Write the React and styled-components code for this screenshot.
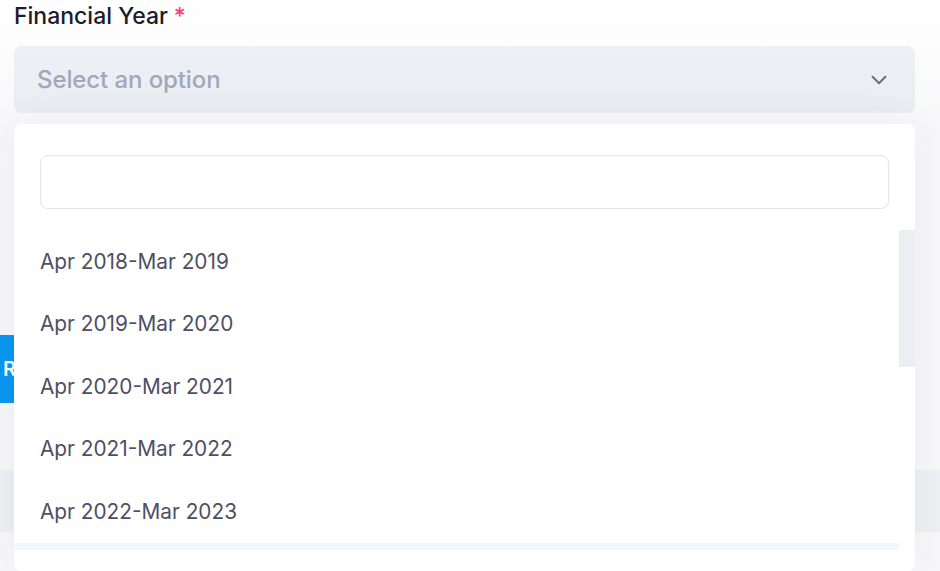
import React from "react";
import styled, { createGlobalStyle } from "styled-components";

const GlobalStyle = createGlobalStyle`
    html, body {
        margin: 0;
        padding: 0;
    }
    body {
        background: linear-gradient(#ffffff 0, #f7f7f9 140px);
        font-family: Inter, "Noto Sans", sans-serif;
        overflow: hidden;
    }
`;

const Page = styled.div`
    width: 940px;
    height: 571px;
    display: flex;
    flex-direction: column;
`;

const FormSection = styled.div`
    padding: 0 25px 0 14px;
`;

const Label = styled.label`
    display: block;
    padding-top: 2px;
    font-size: 23px;
    line-height: 28px;
    font-weight: 500;
    color: #1b1b29;
`;

const Required = styled.span`
    color: #f1416c;
    margin-left: 6px;
`;

const SelectWrap = styled.div`
    position: relative;
    margin-top: 16px;
`;

const SelectBox = styled.div`
    height: 67px;
    border-radius: 8px;
    background: linear-gradient(#edf0f5, #e9ecf1);
    display: flex;
    align-items: center;
    justify-content: space-between;
    padding: 0 25px 0 23px;
`;

const Placeholder = styled.span`
    font-size: 24px;
    color: #a3a7b9;
    font-weight: 500;
    letter-spacing: -0.1px;
`;

const Dropdown = styled.div`
    position: absolute;
    z-index: 10;
    top: calc(100% + 11px);
    left: 0;
    right: 0;
    height: 447px;
    box-sizing: border-box;
    padding: 31px 0 21px;
    background: #ffffff;
    border-radius: 8px;
    box-shadow: 0 0 40px rgba(60, 60, 90, 0.06);
    display: flex;
    flex-direction: column;
`;

const SearchRow = styled.div`
    padding: 0 26px;
`;

const SearchInput = styled.input`
    display: block;
    width: 100%;
    height: 54px;
    box-sizing: border-box;
    border: 1px solid #e3e4ee;
    border-radius: 8px;
    outline: none;
    background: #fff;
`;

const ListArea = styled.div`
    margin-top: 21px;
    height: 320px;
    display: flex;
    overflow: hidden;
`;

const OptionList = styled.ul`
    flex: 1;
    list-style: none;
    margin: 0;
    padding: 0;
`;

const ScrollTrack = styled.div`
    width: 16px;
    flex-shrink: 0;
`;

const ScrollThumb = styled.div`
    height: 137px;
    background: #eceef2;
`;

const Option = styled.li`
    height: 62.5px;
    display: flex;
    align-items: center;
    padding-left: 26px;
    font-size: 20.8px;
    color: #4e4f64;
    background: ${(p) => (p.active ? "#eef8fd" : "transparent")};
`;

const Actions = styled.div`
    margin-top: 222px;
    display: flex;
`;

const Button = styled.button`
    height: 68px;
    border: none;
    background: #0a96f1;
    color: #fff;
    font-family: inherit;
    font-size: 20px;
    font-weight: 600;
    padding: 0 20px 0 3px;
`;

const FooterBand = styled.div`
    margin-top: 67px;
    height: 62px;
    background: #edeff3;
`;

const Chevron = () => (
    <svg width="22" height="22" viewBox="0 0 24 24" fill="none">
        <path
            d="M5 8.5l7 7 7-7"
            stroke="#6a6d7e"
            strokeWidth="2.2"
            strokeLinecap="round"
            strokeLinejoin="round"
        />
    </svg>
);

const years = [2018, 2019, 2020, 2021, 2022];

export default () => {
    return (
        <>
            <GlobalStyle />
            <Page>
                <FormSection>
                    <Label>
                        Financial Year<Required>*</Required>
                    </Label>
                    <SelectWrap>
                        <SelectBox>
                            <Placeholder>Select an option</Placeholder>
                            <Chevron />
                        </SelectBox>
                        <Dropdown>
                            <SearchRow>
                                <SearchInput type="text" />
                            </SearchRow>
                            <ListArea>
                                <OptionList>
                                    {years.map((y) => (
                                        <Option key={y}>
                                            Apr {y}-Mar {y + 1}
                                        </Option>
                                    ))}
                                    <Option active aria-hidden="true" />
                                </OptionList>
                                <ScrollTrack>
                                    <ScrollThumb />
                                </ScrollTrack>
                            </ListArea>
                        </Dropdown>
                    </SelectWrap>
                </FormSection>
                <Actions>
                    <Button>Reset</Button>
                </Actions>
                <FooterBand />
            </Page>
        </>
    );
};
